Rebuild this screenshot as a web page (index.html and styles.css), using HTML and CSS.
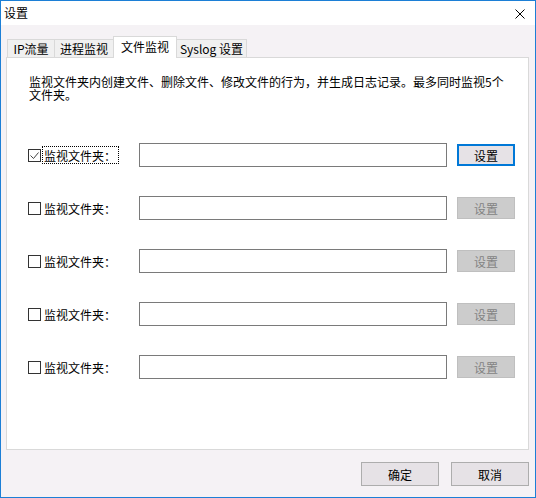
FILE: index.html
```html
<!DOCTYPE html>
<html lang="zh-CN">
<head>
<meta charset="utf-8">
<title>设置</title>
<link rel="stylesheet" href="styles.css">
</head>
<body>
<div class="window">
  <div class="titlebar">
    <span class="title">设置</span>
    <svg class="close" width="10" height="10" viewBox="0 0 10 10"><path d="M0.5 0.5 L9.5 9.5 M9.5 0.5 L0.5 9.5" stroke="#000" stroke-width="1" fill="none"/></svg>
  </div>
  <div class="main">
    <div class="tabs">
      <div class="tab t1">IP流量</div>
      <div class="tab t2">进程监视</div>
      <div class="tab t3 selected">文件监视</div>
      <div class="tab t4">Syslog 设置</div>
    </div>
    <div class="panel">
      <p class="desc">监视文件夹内创建文件、删除文件、修改文件的行为，并生成日志记录。最多同时监视5个文件夹。</p>
      <div class="rows">
        <div class="row">
          <div class="check"><span class="box"><svg width="11" height="11" viewBox="0 0 11 11"><path d="M1.5 5.5 L4.5 8.5 L9.5 2.5" stroke="#444" stroke-width="1" fill="none"/></svg></span><span class="label focus">监视文件夹：</span></div>
          <div class="input"></div>
          <div class="btn focused">设置</div>
        </div>
        <div class="row">
          <div class="check"><span class="box"></span><span class="label">监视文件夹：</span></div>
          <div class="input"></div>
          <div class="btn disabled">设置</div>
        </div>
        <div class="row">
          <div class="check"><span class="box"></span><span class="label">监视文件夹：</span></div>
          <div class="input"></div>
          <div class="btn disabled">设置</div>
        </div>
        <div class="row">
          <div class="check"><span class="box"></span><span class="label">监视文件夹：</span></div>
          <div class="input"></div>
          <div class="btn disabled">设置</div>
        </div>
        <div class="row">
          <div class="check"><span class="box"></span><span class="label">监视文件夹：</span></div>
          <div class="input"></div>
          <div class="btn disabled">设置</div>
        </div>
      </div>
    </div>
    <div class="footer">
      <div class="dbtn">确定</div>
      <div class="dbtn">取消</div>
    </div>
  </div>
</div>
</body>
</html>
```

FILE: styles.css
```css
* { box-sizing: border-box; }
html, body { margin: 0; padding: 0; }
body {
  font-family: "Noto Sans CJK SC", "Microsoft YaHei", sans-serif;
  font-size: 12px;
  color: #000;
}
.window {
  width: 536px;
  height: 498px;
  border: 1px solid #1c7fd6;
  background: #f5f2f5;
  display: flex;
  flex-direction: column;
}
.titlebar {
  height: 24px;
  background: #fff;
  display: flex;
  align-items: center;
  justify-content: space-between;
  padding: 0 10px 0 3px;
  line-height: 14px;
}
.close { display: block; margin-top: 1px; }
.main {
  padding: 11px 6px 0 5px;
}
.tabs {
  display: flex;
  align-items: flex-end;
  height: 21px;
  padding-left: 1px;
}
.tab {
  height: 18px;
  border: 1px solid #d9d9d9;
  border-bottom: none;
  background: #f0f0f0;
  display: flex;
  align-items: center;
  justify-content: center;
  line-height: 14px;
  margin-left: -1px;
}
.t1 { width: 48px; margin-left: 0; }
.t2 { width: 60px; }
.t3 { width: 64px; }
.t4 { width: 71px; }
.tab.selected {
  height: 22px;
  background: #fff;
  margin-bottom: -1px;
  position: relative;
  z-index: 1;
  padding-bottom: 2px;
}
.panel {
  width: 523px;
  height: 393px;
  background: #fff;
  border: 1px solid #d9d9d9;
  padding: 17px 20px 0 22px;
}
.desc {
  margin: 0;
  line-height: 13px;
  width: 476px;
}
.rows {
  margin-top: 42px;
  margin-left: -1px;
  display: flex;
  flex-direction: column;
  gap: 29px;
}
.row {
  display: grid;
  grid-template-columns: 101px 308px 58px;
  column-gap: 10px;
  align-items: center;
  height: 24px;
}
.check {
  display: flex;
  align-items: center;
}
.box {
  width: 13px;
  height: 13px;
  border: 1px solid #333;
  background: #fff;
  display: flex;
  align-items: center;
  justify-content: center;
}
.box svg { display: block; }
.label {
  margin-left: 1px;
  padding: 1px 2px 1px 1px;
  height: 18px;
  line-height: 16px;
  border: 1px solid transparent;
}
.label.focus { border: 1px dotted #000; }
.input {
  height: 24px;
  border: 1px solid #7a7a7a;
  background: #fff;
}
.btn {
  height: 22px;
  display: flex;
  align-items: center;
  justify-content: center;
  background: #e6e2e6;
  border: 1px solid #adadad;
}
.btn.focused { border: 2px solid #0078d7; }
.btn.disabled {
  background: #cccccc;
  border-color: #bfbfbf;
  color: #838383;
}
.footer {
  margin-top: 12px;
  display: flex;
  justify-content: flex-end;
  gap: 12px;
}
.dbtn {
  width: 78px;
  height: 24px;
  display: flex;
  align-items: center;
  justify-content: center;
  background: #e6e2e6;
  border: 1px solid #adadad;
}
```
